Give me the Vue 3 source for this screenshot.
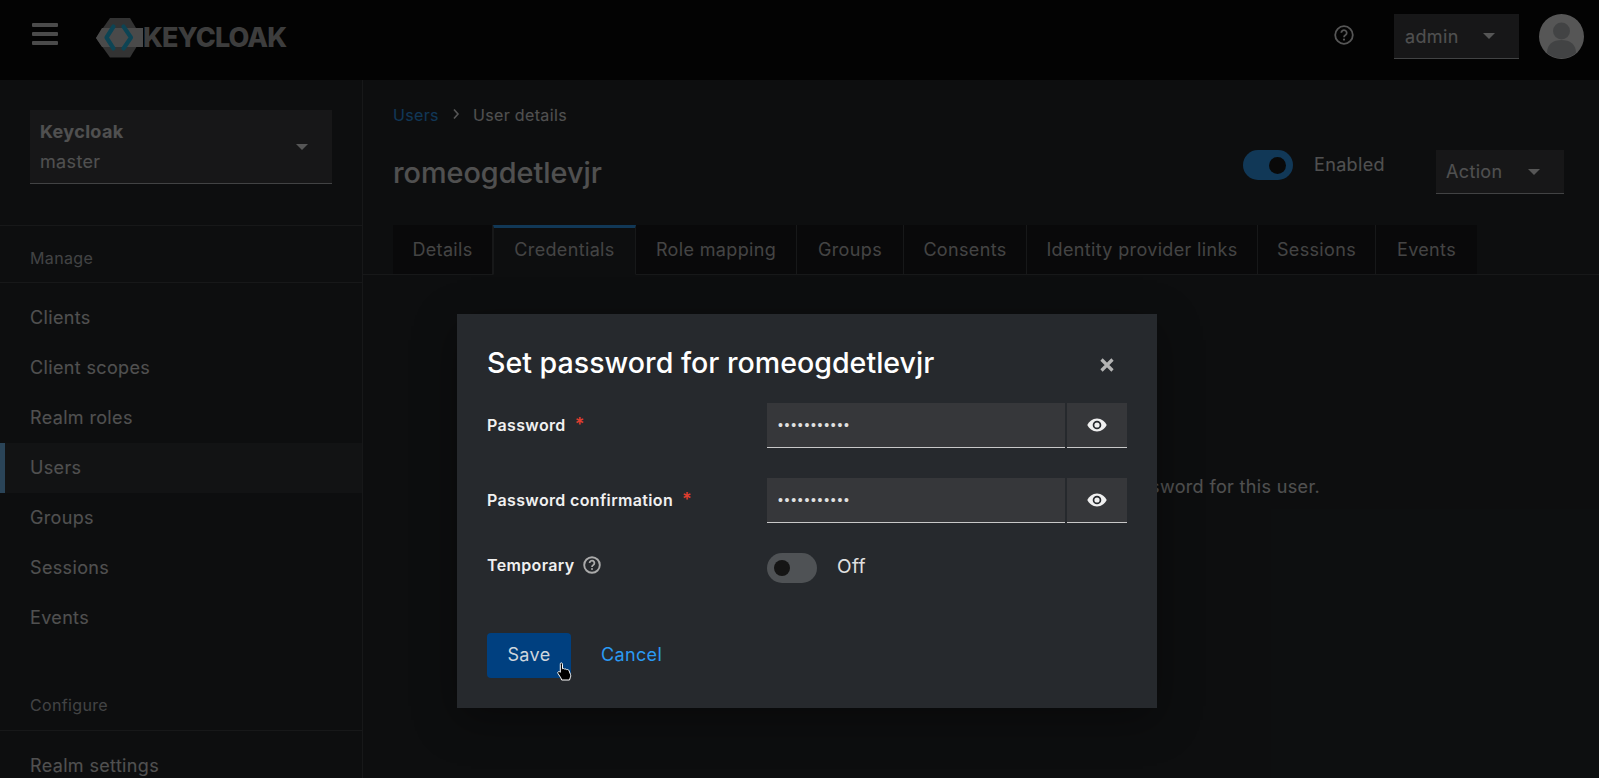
<script setup>
const manage = ['Clients', 'Client scopes', 'Realm roles', 'Users', 'Groups', 'Sessions', 'Events']
const tabs = ['Details', 'Credentials', 'Role mapping', 'Groups', 'Consents', 'Identity provider links', 'Sessions', 'Events']
</script>

<template>
  <div class="page">
    <header class="masthead">
      <div class="burger"><i></i><i></i><i></i></div>
      <div class="logo">
        <svg class="logo-mark" width="50" height="40" viewBox="0 0 50 40">
          <path d="M14 0h20l12 20-12 19.500H14L0 20z" fill="#8c8c8c"/>
          <path d="M6 10h41v19H6L0 20z" fill="#cfcfcf"/>
          <path d="M17.500 8.500L10.500 19.500l7 11" fill="none" stroke="#22bcea" stroke-width="4.200" stroke-linecap="round" stroke-linejoin="round"/>
          <path d="M27.500 8.500L35 19.500l-7.500 11" fill="none" stroke="#22bcea" stroke-width="4.200" stroke-linecap="round" stroke-linejoin="round"/>
        </svg>
        <span class="logo-text">KEYCLOAK</span>
      </div>
      <div class="spacer"></div>
      <svg class="help" width="20" height="20" viewBox="0 0 20 20">
        <circle cx="10" cy="10" r="8.800" fill="none" stroke="#f0f0f0" stroke-width="1.800"/>
        <path d="M7.300 7.800a2.700 2.700 0 1 1 4.200 2.300c-1 .6-1.500 1-1.500 2.100" fill="none" stroke="#f0f0f0" stroke-width="1.800"/>
        <circle cx="10" cy="14.600" r="1.100" fill="#f0f0f0"/>
      </svg>
      <div class="select user-select"><span>admin</span><b class="caret"></b></div>
      <svg class="avatar" width="45" height="45" viewBox="0 0 45 45">
        <circle cx="22.500" cy="22.500" r="22.500" fill="#f0f0f0"/>
        <circle cx="22.500" cy="17" r="8.500" fill="#b8bbbe"/>
        <path d="M8 39c0-9 6-13 14.500-13S37 30 37 39a22.500 22.500 0 0 1-29 0z" fill="#b8bbbe"/>
      </svg>
    </header>

    <div class="body">
      <aside class="sidebar">
        <div class="realm-wrap">
          <div class="select realm-select">
            <div><div class="realm-name">Keycloak</div><div class="realm-sub">master</div></div>
            <b class="caret"></b>
          </div>
        </div>
        <div class="nav-heading">Manage</div>
        <nav class="nav-list">
          <a v-for="item in manage" :key="item" class="nav-item" :class="{ current: item === 'Users' }">{{ item }}</a>
        </nav>
        <div class="nav-heading configure">Configure</div>
        <nav class="nav-list">
          <a class="nav-item">Realm settings</a>
        </nav>
      </aside>

      <main class="main">
        <div class="breadcrumb">
          <a>Users</a>
          <svg width="8" height="12" viewBox="0 0 8 12"><path d="M2 1.500L6 6l-4 4.500" fill="none" stroke="#f0f0f0" stroke-width="1.600"/></svg>
          <span>User details</span>
        </div>
        <div class="title-row">
          <h1>romeogdetlevjr</h1>
          <div class="title-actions">
            <div class="switch on"><i></i></div>
            <span class="switch-label">Enabled</span>
            <div class="select action-select"><span>Action</span><b class="caret"></b></div>
          </div>
        </div>
        <div class="tabs">
          <div v-for="tab in tabs" :key="tab" class="tab" :class="{ active: tab === 'Credentials' }">{{ tab }}</div>
        </div>
        <p class="empty">You can set a password for this user.</p>
      </main>
    </div>

    <div class="backdrop"></div>

    <section class="modal">
      <div class="modal-head">
        <h2>Set password for romeogdetlevjr</h2>
        <svg class="close" width="16" height="16" viewBox="0 0 16 16"><path d="M2.500 2.500l11 11m0-11l-11 11" stroke="#b4b4b4" stroke-width="3.200"/></svg>
      </div>
      <div class="field">
        <label>Password <em>*</em></label>
        <div class="input-group">
          <input type="password" value="abcdefghijk" readonly />
          <div class="eye-btn">
            <svg width="20" height="14" viewBox="0 0 20 14"><path d="M10 .5C5.500.5 2 3.500.3 7 2 10.500 5.500 13.500 10 13.500s8-3 9.700-6.500C18 3.500 14.500.5 10 .5z" fill="#f0f0f0"/><circle cx="10" cy="7" r="4.300" fill="#26292d"/><circle cx="10" cy="7" r="2.600" fill="#f0f0f0"/></svg>
          </div>
        </div>
      </div>
      <div class="field">
        <label>Password confirmation <em>*</em></label>
        <div class="input-group">
          <input type="password" value="abcdefghijk" readonly />
          <div class="eye-btn">
            <svg width="20" height="14" viewBox="0 0 20 14"><path d="M10 .5C5.500.5 2 3.500.3 7 2 10.500 5.500 13.500 10 13.500s8-3 9.700-6.500C18 3.500 14.500.5 10 .5z" fill="#f0f0f0"/><circle cx="10" cy="7" r="4.300" fill="#26292d"/><circle cx="10" cy="7" r="2.600" fill="#f0f0f0"/></svg>
          </div>
        </div>
      </div>
      <div class="field toggle-field">
        <label>Temporary
          <svg width="18" height="18" viewBox="0 0 18 18">
            <circle cx="9" cy="9" r="7.800" fill="none" stroke="#aaa" stroke-width="1.900"/>
            <path d="M6.600 7a2.400 2.400 0 1 1 3.700 2c-.9.500-1.300.9-1.300 1.900" fill="none" stroke="#aaa" stroke-width="1.800"/>
            <circle cx="9" cy="13" r="1" fill="#aaa"/>
          </svg>
        </label>
        <div class="toggle-wrap">
          <div class="switch off"><i></i></div>
          <span class="off-label">Off</span>
        </div>
      </div>
      <div class="modal-actions">
        <button class="save">Save</button>
        <a class="cancel">Cancel</a>
      </div>
      <svg class="cursor" width="15" height="19" viewBox="0 0 15 19">
        <path d="M3.500 1.200c.9-.7 2-.2 2 1v4.500c1-.4 1.800-.1 2.200.5.800-.4 1.600-.1 2 .5.800-.4 2 0 2.300.9l1.500 3.900c.4 1 .2 2.300-.3 3.300l-.7 2.200H4.700l-.9-2.200L1 11.500c-.5-.8-.2-1.500.3-1.800.7-.4 1.300-.1 2 .6V2.500c0-.5 0-1 .2-1.300z" fill="#000" stroke="#fff" stroke-width="1"/>
      </svg>
    </section>
  </div>
</template>

<style>
html, body { margin: 0; background: #212427; overflow: hidden; }
</style>

<style scoped>
.page {
  position: relative;
  width: 1599px;
  height: 778px;
  overflow: hidden;
  background: #212427;
  color: #e0e0e0;
  font-family: "Inter", "Noto Sans", sans-serif;
  font-size: 18px;
  letter-spacing: .35px;
}
.masthead {
  height: 80px;
  box-sizing: border-box;
  background: #030303;
  display: flex;
  align-items: flex-start;
}
.burger {
  margin: 23px 0 0 32px;
  width: 26px;
  display: flex;
  flex-direction: column;
  gap: 5px;
}
.burger i { display: block; height: 4px; border-radius: 1px; background: #d2d2d2; }
.logo { margin: 18px 0 0 38px; display: flex; align-items: center; }
.logo-mark { display: block; }
.logo-text {
  margin-left: -3px;
  font-family: "Inter", sans-serif;
  font-weight: 800;
  font-size: 27px;
  line-height: 40px;
  letter-spacing: -.9px;
  color: #a8a8a8;
}
.spacer { flex: 1; }
.help { margin: 25px 40px 0 0; }
.select {
  display: flex;
  align-items: center;
  justify-content: space-between;
  box-sizing: border-box;
  background: #3d3e41;
  border-bottom: 1px solid #b8bbbe;
}
.caret {
  display: block;
  width: 0;
  height: 0;
  border-left: 6px solid transparent;
  border-right: 6px solid transparent;
  border-top: 6px solid #f0f0f0;
}
.user-select {
  margin-top: 14px;
  width: 125px;
  height: 45px;
  padding: 0 24px 0 11px;
}
.avatar { margin: 14px 15px 0 20px; }
.body { display: flex; height: 698px; }
.sidebar {
  width: 363px;
  flex: none;
  box-sizing: border-box;
  border-right: 1px solid #3c3f42;
}
.realm-wrap {
  padding: 30px 30px 41px;
  border-bottom: 1px solid #3c3f42;
}
.realm-select { height: 74px; width: 302px; padding: 0 24px 0 10px; }
.realm-name { font-weight: 700; line-height: 30px; }
.realm-sub { line-height: 30px; }
.nav-heading {
  height: 57px;
  box-sizing: border-box;
  padding: 21px 0 0 30px;
  line-height: 22px;
  font-size: 16px;
  color: #b8bbbe;
  border-bottom: 1px solid #3c3f42;
}
.nav-heading.configure { margin-top: 31px; padding-top: 20px; }
.nav-list { display: flex; flex-direction: column; padding-top: 10px; }
.nav-item {
  height: 50px;
  line-height: 50px;
  padding-left: 30px;
}
.nav-item.current {
  background: #2f3336;
  box-shadow: inset 5px 0 0 #73bcf7;
}
.main { flex: 1; min-width: 0; display: flex; flex-direction: column; }
.breadcrumb {
  height: 70px;
  box-sizing: border-box;
  padding: 24px 0 0 30px;
  display: flex;
  align-items: flex-start;
  line-height: 22px;
  font-size: 16px;
  gap: 13px;
}
.breadcrumb a { color: #2b9af3; }
.breadcrumb svg { margin-top: 4px; }
.title-row {
  height: 75px;
  padding: 0 35px 0 30px;
  display: flex;
  justify-content: space-between;
  align-items: flex-start;
}
h1 {
  margin: 0;
  font-size: 28.800px;
  font-weight: 500;
  letter-spacing: 0;
  line-height: 46px;
}
.title-actions { display: flex; align-items: flex-start; }
.switch {
  width: 50px;
  height: 30px;
  border-radius: 15px;
  position: relative;
  flex: none;
}
.switch i {
  position: absolute;
  top: 7px;
  width: 16px;
  height: 16px;
  border-radius: 50%;
  background: #151515;
}
.switch.on { background: #2b9af3; }
.switch.on i { right: 7px; width: 17px; height: 17px; }
.switch.off { background: #4f5255; }
.switch.off i { left: 7px; }
.switch-label { margin-left: 21px; line-height: 30px; width: 122px; }
.action-select { width: 128px; height: 44px; padding: 0 24px 0 10px; }
.tabs {
  height: 50px;
  box-sizing: border-box;
  padding-left: 30px;
  border-bottom: 1px solid #3c3f42;
  display: grid;
  grid-template-columns: 100px 143px 161px 107px 123px 231px 118px 101px;
  justify-content: start;
}
.tab {
  height: 49px;
  line-height: 49px;
  text-align: center;
  color: #bdbdbd;
  background: #151618;
  border-right: 1px solid #3c3f42;
  box-sizing: border-box;
  white-space: nowrap;
}
.tab:last-child { border-right: 0; }
.tab.active {
  background: #212427;
  height: 50px;
  border-left: 1px solid #3c3f42;
  border-top: 3px solid #2b9af3;
  line-height: 43px;
  border-bottom: 1px solid #212427;
}
.empty {
  margin: 0;
  padding-top: 200px;
  padding-right: 279px;
  text-align: right;
  white-space: nowrap;
  line-height: 24px;
}
.backdrop {
  position: absolute;
  inset: 0;
  background: rgba(3, 3, 3, .65);
}
.modal {
  position: absolute;
  left: 457px;
  top: 314px;
  width: 700px;
  height: 394px;
  box-sizing: border-box;
  padding: 30px 30px 0;
  background: #26292d;
  box-shadow: 0 12px 40px rgba(0, 0, 0, .35);
}
.modal-head {
  height: 59px;
  display: flex;
  justify-content: space-between;
  align-items: flex-start;
}
h2 {
  margin: 0;
  font-size: 28.600px;
  font-weight: 500;
  letter-spacing: 0;
  line-height: 38px;
  color: #fff;
}
.close { margin: 13px 12px 0 0; }
.field {
  display: flex;
  height: 75px;
  padding-left: 0;
  font-size: 16px;
}
label {
  width: 280px;
  flex: none;
  font-weight: 600;
  color: #f0f0f0;
  line-height: 44px;
  display: flex;
  align-items: flex-start;
  gap: 9px;
}
label em { color: #e03e2f; font-style: normal; font-size: 18px; line-height: 44px; }
label svg { margin-top: 3px; }
.input-group { width: 360px; height: 45px; display: flex; gap: 1px; }
input {
  flex: 1;
  min-width: 0;
  box-sizing: border-box;
  border: 0;
  border-bottom: 1px solid #c8c8c8;
  background: #36373a;
  color: #e0e0e0;
  padding: 0 11px;
  font-family: "Liberation Sans", sans-serif;
  font-size: 14px;
  letter-spacing: 1.700px;
  outline: none;
}
.eye-btn {
  width: 60px;
  margin-left: 1px;
  box-sizing: border-box;
  background: #36373a;
  border-bottom: 1px solid #c8c8c8;
  display: flex;
  align-items: center;
  justify-content: center;
}
.toggle-field { height: 50px; }
.toggle-field label { line-height: 24px; }
.toggle-wrap { display: flex; align-items: flex-start; }
.off-label { margin-left: 20px; line-height: 28px; font-size: 19px; color: #e0e0e0; }
.modal-actions {
  margin-top: 30px;
  display: flex;
  align-items: center;
  gap: 30px;
}
.save {
  width: 84px;
  height: 45px;
  border: 0;
  border-radius: 4px;
  background: #004080;
  color: #cfd6dd;
  font: inherit;
  letter-spacing: .35px;
  padding: 0 0 3px;
}
.cancel { color: #2b9af3; margin-top: -3px; }
.cursor { position: absolute; left: 100px; top: 348px; }
</style>
